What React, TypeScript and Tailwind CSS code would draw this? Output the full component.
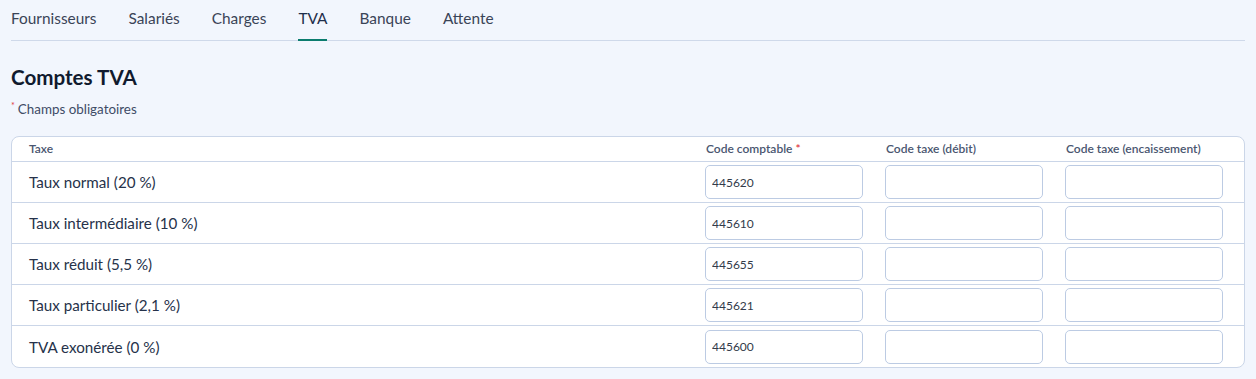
const TABS = ['Fournisseurs', 'Salariés', 'Charges', 'TVA', 'Banque', 'Attente'];

const ROWS = [
  { label: 'Taux normal (20 %)', code: '445620' },
  { label: 'Taux intermédiaire (10 %)', code: '445610' },
  { label: 'Taux réduit (5,5 %)', code: '445655' },
  { label: 'Taux particulier (2,1 %)', code: '445621' },
  { label: 'TVA exonérée (0 %)', code: '445600' },
];

const inputCls =
  'h-[34px] w-[158px] rounded-[5px] border border-[#bccbe3] bg-white px-[6px] text-[12px] text-[#333b4a] outline-none';

export default function App() {
  return (
    <div className="min-h-[379px] bg-[#f2f6fd] px-[11px] font-['Lato','Liberation_Sans',sans-serif] text-[#1c2a44]">
      <nav className="flex gap-[32px] border-b border-[#cfd9ea] pt-[8px] text-[15.4px] text-[#3a4457]">
        {TABS.map((t) => (
          <button
            key={t}
            type="button"
            className={
              t === 'TVA'
                ? 'relative pb-[12px] leading-[20px] text-[#1f2f4b] after:absolute after:inset-x-0 after:-bottom-[1px] after:h-[2px] after:bg-[#0b7c6e]'
                : 'pb-[12px] leading-[20px]'
            }
          >
            {t}
          </button>
        ))}
      </nav>

      <h1 className="mt-[23px] text-[20.6px] font-bold leading-[26px] text-[#101a2e]">Comptes TVA</h1>
      <p className="mt-[10px] text-[13.4px] leading-[18px] text-[#3e4b66]">
        <span className="relative -top-[5px] mr-[3px] text-[9px] text-[#e0383e]">*</span>
        Champs obligatoires
      </p>

      <div className="mt-[16px] overflow-hidden rounded-[8px] border border-[#cbd6e8] bg-white">
        <div className="grid h-[25px] grid-cols-[694px_180px_180px_1fr] items-center border-b border-[#cbd6e8] text-[12px] font-semibold text-[#4a5670]">
          <div className="pl-[17px]">Taxe</div>
          <div>
            Code comptable <span className="text-[#e0383e]">*</span>
          </div>
          <div>Code taxe (débit)</div>
          <div>Code taxe (encaissement)</div>
        </div>
        {ROWS.map((r, i) => (
          <div
            key={r.label}
            className={
              'grid h-[41px] grid-cols-[693px_180px_180px_1fr] items-center ' +
              (i < ROWS.length - 1 ? 'border-b border-[#cbd6e8]' : '')
            }
          >
            <div className="pl-[17px] pt-[1px] text-[15.2px] text-[#26324a]">{r.label}</div>
            <div>
              <input className={inputCls} defaultValue={r.code} />
            </div>
            <div>
              <input className={inputCls} />
            </div>
            <div>
              <input className={inputCls} />
            </div>
          </div>
        ))}
      </div>
    </div>
  );
}
